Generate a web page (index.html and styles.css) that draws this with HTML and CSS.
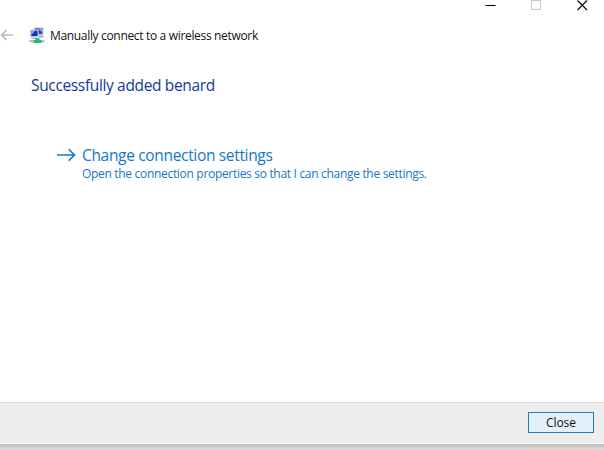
FILE: index.html
```
<!DOCTYPE html>
<html lang="en">
<head>
<meta charset="utf-8">
<title>Manually connect to a wireless network</title>
<link rel="stylesheet" href="styles.css">
</head>
<body>
<div class="window">
  <div class="caption">
    <svg class="cap" width="11" height="11" viewBox="0 0 11 11"><path d="M0.5 5.5H10.5" stroke="#000"/></svg>
    <svg class="cap" width="11" height="11" viewBox="0 0 11 11"><rect x="0.5" y="0.5" width="9" height="9" fill="none" stroke="#c8c8c8"/></svg>
    <svg class="cap" width="11" height="11" viewBox="0 0 11 11"><path d="M0.5 0.5L10 10M10 0.5L0.5 10" stroke="#000" stroke-width="1.1"/></svg>
  </div>
  <header class="header">
    <svg class="back" width="14" height="12" viewBox="0 0 14 12"><path d="M13 6H2M6.5 1.2L1.7 6L6.5 10.8" fill="none" stroke="#bcbcbc" stroke-width="1.7"/></svg>
    <svg class="net" width="16" height="17" viewBox="0 0 16 17">
      <rect x="5" y="0.5" width="9.5" height="8" rx="0.8" fill="#b9c3d4"/>
      <rect x="6.2" y="1.5" width="7" height="5.4" fill="#2340b4"/>
      <path d="M9 1.5h4.2v4z" fill="#8fa8ea"/>
      <path d="M10 8.5h4l1 2h-5z" fill="#a6adb8"/>
      <rect x="1" y="2.6" width="8.8" height="7.8" rx="0.8" fill="#c6cedb"/>
      <rect x="2.2" y="3.8" width="6.4" height="5.2" fill="#1834ba"/>
      <path d="M2.2 3.8h3.8l-3.8 4.4z" fill="#8aa8f2"/>
      <path d="M3 10.4h5l1.5 1.4h-8z" fill="#a9b1bd"/>
      <path d="M0.5 14.2H15.5" stroke="#9fb3ac" stroke-width="1.8"/>
      <path d="M6.5 11h4v2h2v3h-8v-3h2z" fill="#29b879"/>
    </svg>
    <span class="title">Manually connect to a wireless network</span>
  </header>
  <main class="content">
    <h1 class="heading">Successfully added benard</h1>
    <div class="command">
      <svg class="go" width="19" height="14" viewBox="0 0 19 14"><path d="M0 7H17.5M11.7 1.2L17.5 7L11.7 12.8" fill="none" stroke="#1477c8" stroke-width="1.6"/></svg>
      <div class="labels">
        <div class="link">Change connection settings</div>
        <div class="note">Open the connection properties so that I can change the settings.</div>
      </div>
    </div>
  </main>
  <footer class="footer"><button class="close">Close</button></footer>
</div>
<div class="shadow"></div>
</body>
</html>
```

FILE: styles.css
```
* { box-sizing: border-box; }
body {
  margin: 0;
  width: 604px;
  height: 450px;
  overflow: hidden;
  display: flex;
  flex-direction: column;
  background: #fff;
  font-family: "Open Sans", "Noto Sans", sans-serif;
  white-space: nowrap;
}
svg { display: block; flex: none; }
.window { height: 444px; display: flex; flex-direction: column; border-bottom: 1px solid #fff; }
.caption { height: 20px; display: flex; justify-content: flex-end; gap: 35px; padding-right: 16px; }
.header { height: 32px; display: flex; align-items: center; }
.back { margin-top: -2px; }
.net { margin: -2px 5px 0 15px; }
.title { font-size: 12px; line-height: 18px; color: #111; letter-spacing: -0.33px; }
.content { flex: 1; padding: 22px 0 0 31px; }
.heading { margin: 0; font-size: 15.5px; line-height: 22px; font-weight: 400; color: #12399b; letter-spacing: -0.35px; }
.command { display: flex; margin: 47px 0 0 26px; color: #1477c8; }
.go { margin: 5px 6px 0 0; }
.link { font-size: 15.5px; line-height: 24px; letter-spacing: -0.33px; }
.note { font-size: 12px; line-height: 14px; letter-spacing: -0.31px; }
.footer { height: 41px; display: flex; justify-content: flex-end; padding: 9px 10px 0 0; background: #eee; border-top: 1px solid #dcdcdc; }
.close { width: 66px; height: 21px; padding: 0; border: 1px solid #1c7cc4; background: #e4f0fa; color: #111; font: 12px/18px "Open Sans", sans-serif; letter-spacing: -0.1px; }
.shadow { height: 6px; background: linear-gradient(#bcbcbc, #dedede); }
```
